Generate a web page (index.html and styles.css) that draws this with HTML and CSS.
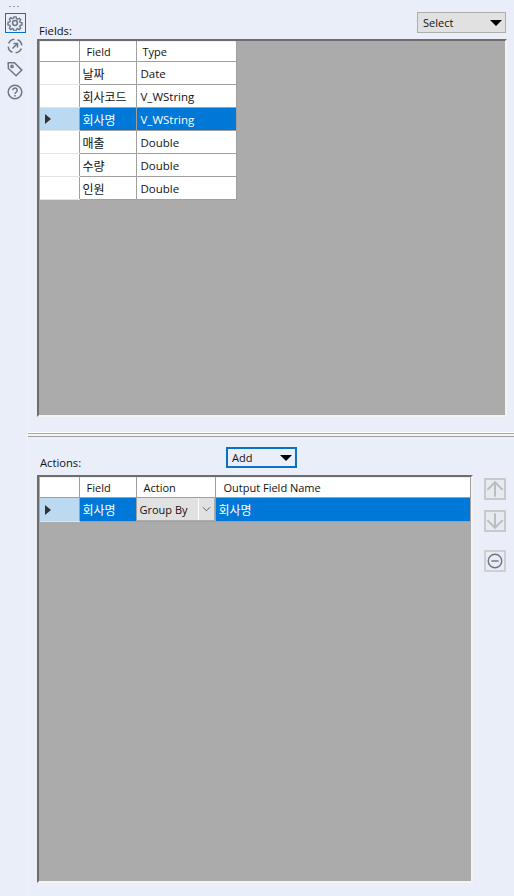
FILE: index.html
```html
<!DOCTYPE html>
<html lang="ko">
<head>
<meta charset="utf-8">
<title>Summarize</title>
<link rel="stylesheet" href="styles.css">
</head>
<body>
<aside class="rail">
  <div class="grip">
    <span class="dot"></span><span class="dot"></span><span class="dot"></span>
  </div>
  <div class="rail-btn rail-btn-active">
    <svg viewBox="0 0 16 16" class="rail-icon"><path d="M6.800 1.200h2.400l.4 2 1.300.6 1.800-1.100 1.600 1.600-1.100 1.800.6 1.300 2 .4v2.400l-2 .4-.6 1.300 1.100 1.800-1.600 1.600-1.800-1.100-1.300.6-.4 2H6.800l-.4-2-1.300-.6-1.800 1.100-1.600-1.600 1.100-1.800-.6-1.300-2-.4V7.200l2-.4.6-1.300-1.100-1.800 1.600-1.600 1.800 1.100 1.300-.6z" transform="translate(.8 .8) scale(.9)"/><circle cx="8" cy="8" r="2.400"/></svg>
  </div>
  <div class="rail-btn">
    <svg viewBox="0 0 16 16" class="rail-icon"><circle cx="8" cy="8" r="6.800" class="dashed" pathLength="40" transform="rotate(22 8 8)"/><path d="M5.500 10.500l5-5M6.500 5.500h4v4" class="bold"/></svg>
  </div>
  <div class="rail-btn">
    <svg viewBox="0 0 16 16" class="rail-icon"><path d="M1.200 1.800h6.300l7.300 7.300-5.700 5.700-7.700-7.300z"/><circle cx="5" cy="5.400" r="1.100"/></svg>
  </div>
  <div class="rail-btn">
    <svg viewBox="0 0 16 16" class="rail-icon"><circle cx="8" cy="8" r="6.800"/><path d="M5.800 6.200a2.200 2.200 0 1 1 3.500 1.800c-.9.600-1.300 1-1.300 2"/><path d="M8 11v1.600"/></svg>
  </div>
</aside>

<main class="panel">
  <section class="upper">
    <div class="upper-head">
      <span class="label label-fields">Fields:</span>
      <div class="select-box">
        <span>Select</span>
        <span class="arrow"></span>
      </div>
    </div>
    <div class="grid-area grid-area-fields">
      <table class="table table-fields">
        <colgroup><col class="c-head"><col class="c-field"><col></colgroup>
        <thead>
          <tr><th class="corner"></th><th>Field</th><th class="th-type">Type</th></tr>
        </thead>
        <tbody>
          <tr><td class="rowhead"></td><td class="kr">날짜</td><td>Date</td></tr>
          <tr><td class="rowhead"></td><td class="kr">회사코드</td><td>V_WString</td></tr>
          <tr class="selected"><td class="rowhead"><span class="caret"></span></td><td class="kr">회사명</td><td>V_WString</td></tr>
          <tr><td class="rowhead"></td><td class="kr">매출</td><td>Double</td></tr>
          <tr><td class="rowhead"></td><td class="kr">수량</td><td>Double</td></tr>
          <tr><td class="rowhead"></td><td class="kr">인원</td><td>Double</td></tr>
        </tbody>
      </table>
    </div>
  </section>

  <div class="splitter"></div>

  <section class="lower">
    <div class="lower-head">
      <span class="label">Actions:</span>
      <div class="add-box">
        <span>Add</span>
        <span class="arrow"></span>
      </div>
    </div>
    <div class="lower-body">
      <div class="grid-area grid-area-actions">
        <table class="table table-actions">
          <colgroup><col class="c-head"><col class="c-field"><col class="c-action"><col></colgroup>
          <thead>
            <tr><th class="corner"></th><th>Field</th><th>Action</th><th class="th-output">Output Field Name</th></tr>
          </thead>
          <tbody>
            <tr class="selected">
              <td class="rowhead"><span class="caret"></span></td>
              <td class="kr">회사명</td>
              <td class="combo-cell">
                <div class="combo"><span class="combo-text">Group By</span><span class="combo-btn"><svg viewBox="0 0 10 6" class="chev"><path d="M1 1l4 4 4-4"/></svg></span></div>
              </td>
              <td class="kr">회사명</td>
            </tr>
          </tbody>
        </table>
      </div>
      <div class="tools">
        <div class="tool">
          <svg viewBox="0 0 20 20" class="tool-icon"><path d="M10 18.500V2.500M1.500 11L10 2.500 18.500 11"/></svg>
        </div>
        <div class="tool">
          <svg viewBox="0 0 20 20" class="tool-icon"><path d="M10 1.500v16M1.500 9l8.500 8.500L18.500 9"/></svg>
        </div>
        <div class="tool tool-remove">
          <svg viewBox="0 0 20 20" class="tool-icon tool-icon-remove"><circle cx="10" cy="10" r="7.500"/><path d="M6 10h8"/></svg>
        </div>
      </div>
    </div>
  </section>
</main>
</body>
</html>
```
FILE: styles.css
```css
* { box-sizing: border-box; }

html, body { height: 100%; }

body {
  margin: 0;
  display: flex;
  width: 514px;
  height: 896px;
  overflow: hidden;
  background: #e9eef9;
  font-family: "Open Sans", "Noto Sans CJK KR", sans-serif;
  font-size: 11px;
  color: #111;
}

.rail {
  width: 28px;
  flex: none;
  display: flex;
  flex-direction: column;
  align-items: center;
  padding-top: 6px;
  border-right: 1px solid #eef2fb;
}

.grip { display: flex; gap: 2px; height: 7px; }
.dot { width: 2px; height: 1px; background: #9aa0ab; }

.rail-btn {
  width: 21px;
  height: 20px;
  margin-bottom: 3px;
  margin-left: 3px;
  display: flex;
  align-items: center;
  justify-content: center;
}
.rail-btn-active { border: 1px solid #0a70c8; }
.rail-icon {
  width: 16px;
  height: 16px;
  fill: none;
  stroke: #6c7686;
  stroke-width: 1.500;
}
.dashed { stroke-dasharray: 7 3; }
.bold { stroke-width: 1.500; }

.panel {
  flex: 1;
  min-width: 0;
  display: flex;
  flex-direction: column;
}

.upper { padding: 13px 7px 0 9px; }

.upper-head {
  display: flex;
  justify-content: space-between;
  align-items: flex-start;
  height: 26px;
}

.label { line-height: 14px; font-size: 11.200px; }
.label-fields { margin-top: 11px; margin-left: 2px; }

.select-box {
  width: 89px;
  height: 21px;
  margin-top: -1px;
  margin-right: 1px;
  display: flex;
  align-items: center;
  justify-content: space-between;
  padding: 0 3px 0 5px;
  background: #e1e1e1;
  border: 1px solid #adadad;
}

.arrow {
  width: 0;
  height: 0;
  border-left: 6px solid transparent;
  border-right: 6px solid transparent;
  border-top: 6px solid #000;
}

.grid-area {
  background: #ababab;
  border-top: 2px solid #6d6d6d;
  border-left: 2px solid #6d6d6d;
  border-right: 2px solid #f3f3f3;
  border-bottom: 2px solid #f3f3f3;
}

.grid-area-fields { height: 378px; padding: 0 1px; }

.table { border-collapse: collapse; table-layout: fixed; background: #fff; }
.table th, .table td {
  padding: 0 0 0 4px;
  border: 1px solid #a0a0a0;
  font-weight: 400;
  font-size: 11.500px;
  text-align: left;
  overflow: hidden;
  white-space: nowrap;
}
.table th { height: 20px; padding-left: 7px; font-size: 11px; border-color: #f0f0f0 #a0a0a0 #a0a0a0 #a0a0a0; }
.table td { height: 23px; }
.table th:first-child, .table td:first-child { border-left: 0; }
.table .th-type { padding-left: 6px; }
.table .th-output { padding-left: 8px; }

.table-fields { width: 197px; }
.c-head { width: 39px; }
.c-field { width: 57px; }
.c-action { width: 79px; }

.corner { background: #fff; }
.table .rowhead { background: #fff; border-color: #e4e4e4 #a0a0a0 #e4e4e4 transparent; padding: 0 0 0 5px; }
.table .kr { font-family: "Noto Sans CJK KR", sans-serif; font-size: 12px; padding-left: 3px; }

.selected td { background: #0078d7; color: #fff; }
.table .selected .rowhead { background: #bbdaf1; }

.caret {
  display: block;
  width: 0;
  height: 0;
  border-top: 5px solid transparent;
  border-bottom: 5px solid transparent;
  border-left: 6px solid #333;
}

.splitter {
  height: 5px;
  margin-top: 15px;
  background: linear-gradient(#fff 1px, #a9a9a9 1px, #a9a9a9 2px, #f5f5f5 2px, #f5f5f5 4px, #a0a0a0 4px);
}

.lower { padding: 0 7px 0 9px; }

.lower-head {
  display: flex;
  align-items: flex-start;
  height: 38px;
}
.lower-head .label { width: 44px; margin-top: 19px; margin-left: 3px; }

.add-box {
  width: 71px;
  height: 21px;
  margin-top: 10px;
  margin-left: 142px;
  display: flex;
  align-items: center;
  justify-content: space-between;
  padding: 0 3px 0 4px;
  background: #e9eef9;
  border: 2px solid #0a70c8;
}

.lower-body { display: flex; align-items: flex-start; }

.grid-area-actions { width: 436px; height: 408px; padding: 0 0 0 1px; flex: none; }
.table-actions { width: 431px; }
.table-actions td { height: 24px; }

.table .combo-cell { padding: 0; }
.combo {
  display: flex;
  height: 23px;
  align-items: stretch;
  background: #e1e1e1;
  color: #111;
  font-size: 11px;
  border-right: 1px solid #adadad;
  border-bottom: 1px solid #adadad;
}
.combo-text { flex: 1; padding-left: 3px; line-height: 23px; }
.combo-btn {
  width: 16px;
  display: flex;
  align-items: center;
  justify-content: center;
  border-left: 1px solid #fff;
}
.chev { width: 9px; height: 6px; fill: none; stroke: #555; stroke-width: 1; }

.tools {
  margin-left: 11px;
  display: flex;
  flex-direction: column;
  gap: 10px;
  padding-top: 3px;
}

.tool {
  width: 22px;
  height: 22px;
  background: #e6eaf3;
  border: 2px solid #c9c9c9;
  display: flex;
  align-items: center;
  justify-content: center;
}
.tool-remove { margin-top: 8px; border-color: #cfcfcf; background: #e8ecf4; }

.tool-icon { width: 18px; height: 18px; fill: none; stroke: #bdbdbd; stroke-width: 2.200; }
.tool-icon-remove { stroke: #6c7686; stroke-width: 1.600; }
```
